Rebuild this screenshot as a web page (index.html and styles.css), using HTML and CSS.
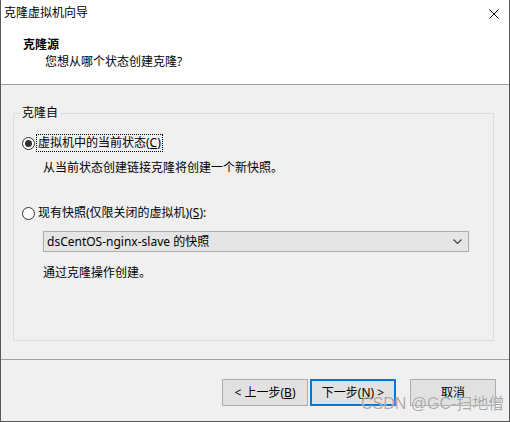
FILE: index.html
```html
<!DOCTYPE html>
<html lang="zh-CN">
<head>
<meta charset="utf-8">
<title>克隆虚拟机向导</title>
<link rel="stylesheet" href="styles.css">
</head>
<body>
<div class="window">
  <div class="header">
    <div class="titlebar">
      <span class="title">克隆虚拟机向导</span>
      <svg class="close" width="10" height="10" viewBox="0 0 10 10"><path d="M0.5 0.5 L9.5 9.5 M9.5 0.5 L0.5 9.5" stroke="#000" stroke-width="1" fill="none"/></svg>
    </div>
    <div class="h-title">克隆源</div>
    <div class="h-sub">您想从哪个状态创建克隆?</div>
  </div>
  <div class="content">
    <fieldset class="group">
      <legend class="legend">克隆自</legend>
      <div class="radio-row first">
        <span class="radio checked"></span>
        <span class="rlabel focus">虚拟机中的当前状态(<u>C</u>)</span>
      </div>
      <div class="desc d1">从当前状态创建链接克隆将创建一个新快照。</div>
      <div class="radio-row second">
        <span class="radio"></span>
        <span class="rlabel">现有快照(仅限关闭的虚拟机)(<u>S</u>):</span>
      </div>
      <div class="select">
        <span class="sel-text">dsCentOS-nginx-slave 的快照</span>
        <svg class="chev" width="9" height="5" viewBox="0 0 9 5"><path d="M0.5 0.5 L4.5 4.5 L8.5 0.5" stroke="#3c3c3c" stroke-width="1.1" fill="none"/></svg>
      </div>
      <div class="desc d2">通过克隆操作创建。</div>
    </fieldset>
  </div>
  <div class="footer">
    <button class="btn">&lt; 上一步(<u>B</u>)</button>
    <button class="btn default">下一步(<u>N</u>) &gt;</button>
    <button class="btn cancel">取消</button>
  </div>
  <div class="watermark">CSDN @GC-扫地僧</div>
</div>
</body>
</html>
```
FILE: styles.css
```css
* { box-sizing: border-box; }
html, body { margin: 0; padding: 0; }
body {
  width: 510px;
  height: 422px;
  font-family: "Noto Sans", "Noto Sans CJK SC", sans-serif;
  font-size: 12px;
  color: #000;
  background: #f0f0f0;
}
.window {
  position: relative;
  width: 510px;
  height: 422px;
  border: 1px solid #5a5a5a;
  border-top: none;
  background: #f0f0f0;
  display: flex;
  flex-direction: column;
}
.header {
  background: #fff;
  height: 85px;
  border-bottom: 1px solid #a0a0a0;
  flex: none;
}
.titlebar {
  height: 26px;
  display: flex;
  align-items: center;
  justify-content: space-between;
  padding-left: 3px;
  padding-right: 10px;
}
.title { line-height: 16px; }
.close { display: block; margin-top: 1px; }
.h-title {
  margin-top: 11px;
  padding-left: 22px;
  font-weight: bold;
  line-height: 16px;
}
.h-sub {
  margin-top: 1px;
  padding-left: 44px;
  line-height: 16px;
}
.content {
  flex: none;
  height: 274px;
  padding-top: 20px;
}
.group {
  margin: 0 15px 0 12px;
  padding: 0 0 59px 8px;
  border: 1px solid #dcdcdc;
  min-width: 0;
}
.legend {
  padding: 0 2px;
  margin-left: -2px;
  line-height: 16px;
}
.radio-row {
  display: flex;
  align-items: center;
  height: 16px;
}
.radio-row.first { margin-top: 14px; }
.radio-row.second { margin-top: 29px; }
.radio {
  width: 13px;
  height: 13px;
  border: 1px solid #333;
  border-radius: 50%;
  background: #fff;
  display: flex;
  align-items: center;
  justify-content: center;
  flex: none;
}
.radio.checked::after {
  content: "";
  width: 7px;
  height: 7px;
  border-radius: 50%;
  background: #333;
}
.rlabel {
  margin-left: 2px;
  padding: 0 1px;
  line-height: 16px;
}
.rlabel.focus { outline: 1px dotted #000; outline-offset: 0; }
.desc {
  margin-left: 21px;
  line-height: 16px;
}
.d1 { margin-top: 9px; }
.d2 { margin-top: 13px; }
.select {
  margin-top: 10px;
  margin-left: 21px;
  width: 426px;
  height: 21px;
  background: #e5e5e5;
  border: 1px solid #adadad;
  display: flex;
  align-items: center;
  justify-content: space-between;
  padding: 0 6px 0 3px;
}
.sel-text { line-height: 16px; }
.chev { display: block; }
.footer {
  flex: 1;
  border-top: 1px solid #a0a0a0;
  display: flex;
  justify-content: flex-end;
  align-items: flex-start;
  padding-top: 19px;
  padding-right: 13px;
}
.btn {
  width: 86px;
  height: 27px;
  background: #e1e1e1;
  border: 1px solid #adadad;
  font-family: inherit;
  font-size: 12px;
  color: #000;
  padding: 0;
  margin: 0;
  line-height: 16px;
}
.btn.default {
  margin-left: 2px;
  border: 2px solid #0078d7;
}
.btn.cancel { margin-left: 14px; }
.watermark {
  position: absolute;
  left: 360px;
  top: 395px;
  font-family: "Liberation Sans", "Noto Sans CJK SC", sans-serif;
  font-size: 16px;
  line-height: 18px;
  color: rgba(140, 140, 140, 0.75);
  text-shadow: 0 0 1px #fff;
  white-space: nowrap;
}
```
